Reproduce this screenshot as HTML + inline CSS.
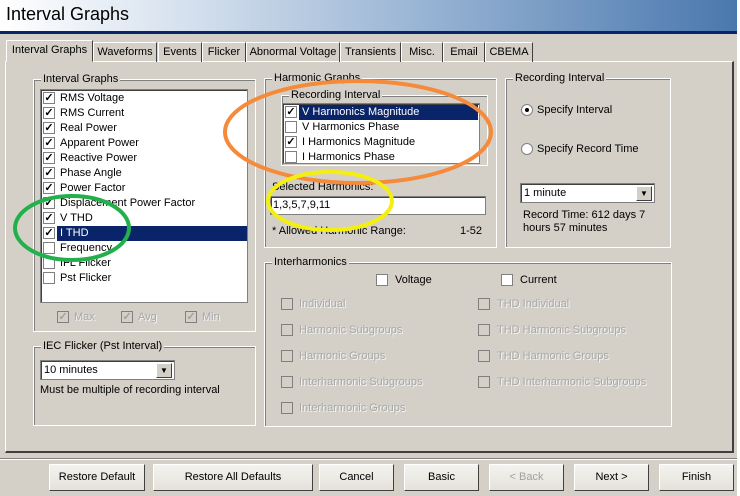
<!DOCTYPE html>
<html><head><style>
*{margin:0;padding:0;box-sizing:border-box}
body{width:740px;height:496px;background:#d4d0c8;font:11px "Liberation Sans",sans-serif;color:#000;position:relative;overflow:hidden}
.a{position:absolute}
.hdr{left:0;top:0;width:737px;height:31px;background:linear-gradient(90deg,#fff 0%,#d6e1ee 25%,#9db7d6 55%,#4a78ae 100%)}
.hdr span{position:absolute;left:6px;top:4px;font-size:18px}
.navy{left:0;top:31px;width:737px;height:3px;background:#0a246a}
.rstrip{left:737px;top:0;width:3px;height:496px;background:#fff}
.tab{top:42px;height:20px;border:1px solid #fff;border-right:1px solid #404040;border-bottom:none;padding:3px 0 0;text-align:center;white-space:nowrap;font-size:11px}
.panel{left:5px;top:61px;width:729px;height:392px;border:1px solid #fff;border-right:2px solid #404040;border-bottom:2px solid #404040}
.grp{border:1px solid #fff;box-shadow:inset 1px 1px 0 #808080}
.grp>b{position:absolute;top:-7px;left:7px;background:#d4d0c8;font-weight:normal;padding:0 2px}
.white{background:#fff;border:1px solid #808080;box-shadow:inset 1px 1px 0 #404040}
.cb{width:12px;height:12px;border:1px solid #808080;background:#fff;display:inline-block;position:absolute;font-size:11px;line-height:10px;text-align:center;font-weight:bold}
.row{position:absolute;height:15px;line-height:15px;white-space:nowrap}
.sel{background:#0a246a;color:#fff}
.dis{color:#a8a8a8;text-shadow:1px 1px 0 #f4f4f4}
.dis .cb{background:#d4d0c8;text-shadow:none}
.btn{top:464px;height:27px;border:1px solid #fff;border-right:1px solid #404040;border-bottom:1px solid #404040;background:linear-gradient(#f4f3ee,#e4e2da);text-align:center;line-height:25px;font-size:11px}
.dd{position:absolute;right:2px;top:2px;width:16px;height:15px;background:#d4d0c8;border:1px solid #fff;border-right-color:#404040;border-bottom-color:#404040;font-size:8px;text-align:center;line-height:14px}
.radio{position:absolute;width:12px;height:12px;border-radius:50%;background:#fff;border:1px solid #808080}
</style></head><body>
<div class="a hdr"><span>Interval Graphs</span></div>
<div class="a navy"></div>
<div class="a rstrip"></div>
<div class="a panel"></div>
<div class="a tab" style="left:6px;top:40px;height:22px;width:87px;background:#d4d0c8;border-bottom:1px solid #d4d0c8">Interval Graphs</div>
<div class="a tab" style="left:93px;width:64px">Waveforms</div>
<div class="a tab" style="left:158px;width:44px">Events</div>
<div class="a tab" style="left:202px;width:44px">Flicker</div>
<div class="a tab" style="left:246px;width:94px">Abnormal Voltage</div>
<div class="a tab" style="left:340px;width:61px">Transients</div>
<div class="a tab" style="left:401px;width:42px">Misc.</div>
<div class="a tab" style="left:443px;width:42px">Email</div>
<div class="a tab" style="left:485px;width:48px">CBEMA</div>

<div class="a grp" style="left:33px;top:79px;width:223px;height:253px"><b>Interval Graphs</b></div>
<div class="a white" style="left:40px;top:89px;width:208px;height:214px"></div>
<div class="a" style="left:43px;top:91px">
<div class="row" style="top:0"><span class="cb" style="top:1px">✓</span><span style="margin-left:17px">RMS Voltage</span></div>
<div class="row" style="top:15px"><span class="cb" style="top:1px">✓</span><span style="margin-left:17px">RMS Current</span></div>
<div class="row" style="top:30px"><span class="cb" style="top:1px">✓</span><span style="margin-left:17px">Real Power</span></div>
<div class="row" style="top:45px"><span class="cb" style="top:1px">✓</span><span style="margin-left:17px">Apparent Power</span></div>
<div class="row" style="top:60px"><span class="cb" style="top:1px">✓</span><span style="margin-left:17px">Reactive Power</span></div>
<div class="row" style="top:75px"><span class="cb" style="top:1px">✓</span><span style="margin-left:17px">Phase Angle</span></div>
<div class="row" style="top:90px"><span class="cb" style="top:1px">✓</span><span style="margin-left:17px">Power Factor</span></div>
<div class="row" style="top:105px"><span class="cb" style="top:1px">✓</span><span style="margin-left:17px">Displacement Power Factor</span></div>
<div class="row" style="top:120px"><span class="cb" style="top:1px">✓</span><span style="margin-left:17px">V THD</span></div>
<div class="row" style="top:135px;width:204px"><span class="cb" style="top:1px">✓</span><span class="sel" style="position:absolute;left:14px;width:190px;padding-left:3px">I THD</span></div>
<div class="row" style="top:150px"><span class="cb" style="top:1px"></span><span style="margin-left:17px">Frequency</span></div>
<div class="row" style="top:165px"><span class="cb" style="top:1px"></span><span style="margin-left:17px">IFL Flicker</span></div>
<div class="row" style="top:180px"><span class="cb" style="top:1px"></span><span style="margin-left:17px">Pst Flicker</span></div>
</div>
<div class="row dis" style="left:57px;top:310px"><span class="cb" style="top:1px;color:#a0a0a0">✓</span><span style="margin-left:17px">Max</span></div>
<div class="row dis" style="left:121px;top:310px"><span class="cb" style="top:1px;color:#a0a0a0">✓</span><span style="margin-left:17px">Avg</span></div>
<div class="row dis" style="left:185px;top:310px"><span class="cb" style="top:1px;color:#a0a0a0">✓</span><span style="margin-left:17px">Min</span></div>

<div class="a grp" style="left:33px;top:346px;width:223px;height:80px"><b>IEC Flicker (Pst Interval)</b></div>
<div class="a white" style="left:40px;top:360px;width:135px;height:20px;padding:3px 3px">10 minutes<span class="dd">▼</span></div>
<div class="a" style="left:40px;top:384px">Must be multiple of recording interval</div>

<div class="a grp" style="left:264px;top:78px;width:233px;height:170px"><b>Harmonic Graphs</b></div>
<div class="a grp" style="left:281px;top:95px;width:207px;height:71px"><b>Recording Interval</b></div>
<div class="a white" style="left:282px;top:103px;width:198px;height:61px"></div>
<div class="a" style="left:285px;top:105px">
<div class="row" style="top:0;width:193px"><span class="cb" style="top:1px">✓</span><span class="sel" style="position:absolute;left:14px;width:179px;padding-left:3px">V Harmonics Magnitude</span></div>
<div class="row" style="top:15px"><span class="cb" style="top:1px"></span><span style="margin-left:17px">V Harmonics Phase</span></div>
<div class="row" style="top:30px"><span class="cb" style="top:1px">✓</span><span style="margin-left:17px">I Harmonics Magnitude</span></div>
<div class="row" style="top:45px"><span class="cb" style="top:1px"></span><span style="margin-left:17px">I Harmonics Phase</span></div>
</div>
<div class="a" style="left:272px;top:181px">Selected Harmonics:</div>
<div class="a white" style="left:270px;top:196px;width:216px;height:19px;padding:2px 2px">1,3,5,7,9,11</div>
<div class="a" style="left:272px;top:225px">* Allowed Harmonic Range:</div>
<div class="a" style="left:460px;top:225px">1-52</div>

<div class="a grp" style="left:505px;top:78px;width:166px;height:170px"><b>Recording Interval</b></div>
<div class="radio" style="left:521px;top:104px"><span style="position:absolute;left:3px;top:3px;width:4px;height:4px;background:#000;border-radius:50%"></span></div>
<div class="a" style="left:537px;top:104px">Specify Interval</div>
<div class="radio" style="left:521px;top:143px"></div>
<div class="a" style="left:537px;top:143px">Specify Record Time</div>
<div class="a white" style="left:520px;top:183px;width:135px;height:20px;padding:3px 3px">1 minute<span class="dd">▼</span></div>
<div class="a" style="left:523px;top:209px;line-height:13px">Record Time: 612 days 7<br>hours 57 minutes</div>

<div class="a grp" style="left:264px;top:262px;width:408px;height:165px"><b>Interharmonics</b></div>
<div class="row" style="left:376px;top:273px"><span class="cb" style="top:1px"></span><span style="margin-left:19px">Voltage</span></div>
<div class="row" style="left:501px;top:273px"><span class="cb" style="top:1px"></span><span style="margin-left:19px">Current</span></div>
<div class="row dis" style="left:281px;top:297px"><span class="cb" style="top:1px"></span><span style="margin-left:18px">Individual</span></div>
<div class="row dis" style="left:281px;top:323px"><span class="cb" style="top:1px"></span><span style="margin-left:18px">Harmonic Subgroups</span></div>
<div class="row dis" style="left:281px;top:349px"><span class="cb" style="top:1px"></span><span style="margin-left:18px">Harmonic Groups</span></div>
<div class="row dis" style="left:281px;top:375px"><span class="cb" style="top:1px"></span><span style="margin-left:18px">Interharmonic Subgroups</span></div>
<div class="row dis" style="left:281px;top:401px"><span class="cb" style="top:1px"></span><span style="margin-left:18px">Interharmonic Groups</span></div>
<div class="row dis" style="left:478px;top:297px"><span class="cb" style="top:1px"></span><span style="margin-left:19px">THD Individual</span></div>
<div class="row dis" style="left:478px;top:323px"><span class="cb" style="top:1px"></span><span style="margin-left:19px">THD Harmonic Subgroups</span></div>
<div class="row dis" style="left:478px;top:349px"><span class="cb" style="top:1px"></span><span style="margin-left:19px">THD Harmonic Groups</span></div>
<div class="row dis" style="left:478px;top:375px"><span class="cb" style="top:1px"></span><span style="margin-left:19px">THD Interharmonic Subgroups</span></div>

<div class="a" style="left:0;top:458px;width:737px;height:1px;background:#808080"></div>
<div class="a" style="left:0;top:459px;width:737px;height:1px;background:#fff"></div>

<div class="a btn" style="left:49px;width:96px">Restore Default</div>
<div class="a btn" style="left:153px;width:160px">Restore All Defaults</div>
<div class="a btn" style="left:319px;width:75px">Cancel</div>
<div class="a btn" style="left:404px;width:75px">Basic</div>
<div class="a btn" style="left:489px;width:75px;color:#a0a0a0">&lt; Back</div>
<div class="a btn" style="left:574px;width:75px">Next &gt;</div>
<div class="a btn" style="left:659px;width:75px">Finish</div>

<svg class="a" style="left:0;top:0" width="740" height="496">
<ellipse cx="358" cy="132" rx="133" ry="51" fill="none" stroke="#f58a3a" stroke-width="4"/>
<ellipse cx="330" cy="201" rx="62" ry="29" fill="none" stroke="#f5ef10" stroke-width="4"/>
<ellipse cx="72" cy="228" rx="57" ry="32" fill="none" stroke="#22b04c" stroke-width="4"/>
</svg>
</body></html>
